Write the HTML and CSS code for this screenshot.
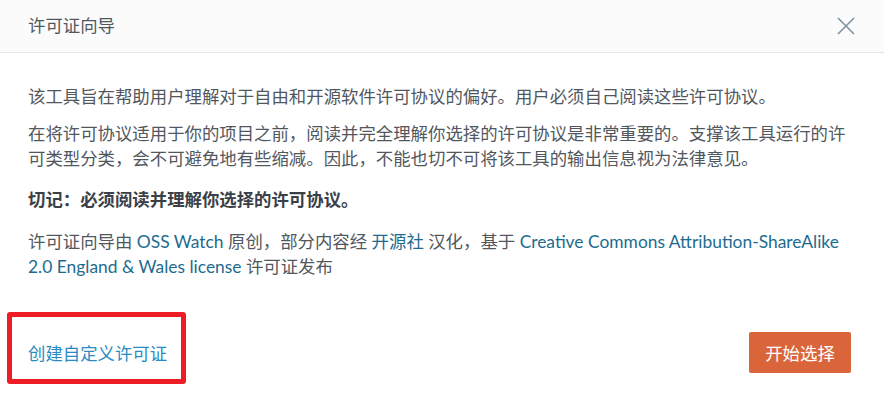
FILE: index.html
```html
<!DOCTYPE html>
<html lang="zh-CN">
<head>
<meta charset="utf-8">
<title>许可证向导</title>
<link rel="stylesheet" href="styles.css">
</head>
<body>
<div class="dialog">
  <header class="dialog-header">
    <h1 class="dialog-title">许可证向导</h1>
    <button class="close-btn" aria-label="关闭">
      <svg width="18" height="18" viewBox="0 0 18 18"><path d="M1 1 L17 17 M17 1 L1 17" stroke="#7d939f" stroke-width="1.6" fill="none"/></svg>
    </button>
  </header>
  <main class="dialog-body">
    <p class="para p-first">该工具旨在帮助用户理解对于自由和开源软件许可协议的偏好。用户必须自己阅读这些许可协议。</p>
    <p class="para p-second">在将许可协议适用于你的项目之前，阅读并完全理解你选择的许可协议是非常重要的。支撑该工具运行的许可类型分类，会不可避免地有些缩减。因此，不能也切不可将该工具的输出信息视为法律意见。</p>
    <p class="para p-strong"><strong>切记：必须阅读并理解你选择的许可协议。</strong></p>
    <p class="para p-credit">许可证向导由 <a href="#">OSS Watch</a> 原创，部分内容经 <a href="#">开源社</a> 汉化，基于 <a href="#">Creative Commons Attribution-ShareAlike 2.0 England &amp; Wales license</a> 许可证发布</p>
  </main>
  <footer class="dialog-footer">
    <a class="custom-link" href="#">创建自定义许可证</a>
    <span class="highlight-box"></span>
    <button class="start-btn">开始选择</button>
  </footer>
</div>
</body>
</html>
```
FILE: styles.css
```css
* { box-sizing: border-box; }
html, body {
  margin: 0;
  padding: 0;
  background: #ffffff;
}
body {
  font-family: "Segoe UI", Lato, "Noto Sans CJK SC", sans-serif;
  font-size: 17.4px;
  color: #52575e;
  width: 884px;
  height: 403px;
  overflow: hidden;
}
.dialog {
  display: flex;
  flex-direction: column;
  height: 403px;
}
.dialog-header {
  height: 53px;
  background: #fbfbfb;
  border-bottom: 1px solid #e6e6e6;
  display: flex;
  align-items: center;
  justify-content: space-between;
  padding: 0 28px 0 28px;
}
.dialog-title {
  margin: 0;
  font-size: 17.4px;
  font-weight: normal;
  color: #52575e;
  line-height: 22px;
}
.close-btn {
  border: 0;
  background: transparent;
  padding: 0;
  width: 18px;
  height: 18px;
  display: flex;
  margin-right: 1px;
}
.dialog-body {
  padding: 31px 26px 0 28px;
}
.para {
  margin: 0;
  line-height: 25px;
}
.p-first { margin-bottom: 12px; }
.p-second { margin-bottom: 16px; }
.p-strong { margin-bottom: 17px; }
.p-strong strong {
  color: #3b3f47;
  font-weight: bold;
}
.para a {
  color: #1d6b8e;
  text-decoration: none;
}
.dialog-footer {
  position: relative;
  display: flex;
  align-items: center;
  justify-content: space-between;
  padding: 53px 33px 0 28px;
}
.custom-link {
  color: #2a8bc3;
  text-decoration: none;
  line-height: 22px;
  margin-top: 3px;
}
.highlight-box {
  position: absolute;
  left: 7px;
  top: 33px;
  width: 179px;
  height: 72px;
  border: 5px solid #ee1c25;
  border-radius: 3px;
}
.start-btn {
  font-family: "Segoe UI", Lato, "Noto Sans CJK SC", sans-serif;
  font-size: 17.4px;
  color: #ffffff;
  background: #da653a;
  border: 0;
  border-radius: 2px;
  width: 102px;
  height: 41px;
  padding: 0;
}
```
